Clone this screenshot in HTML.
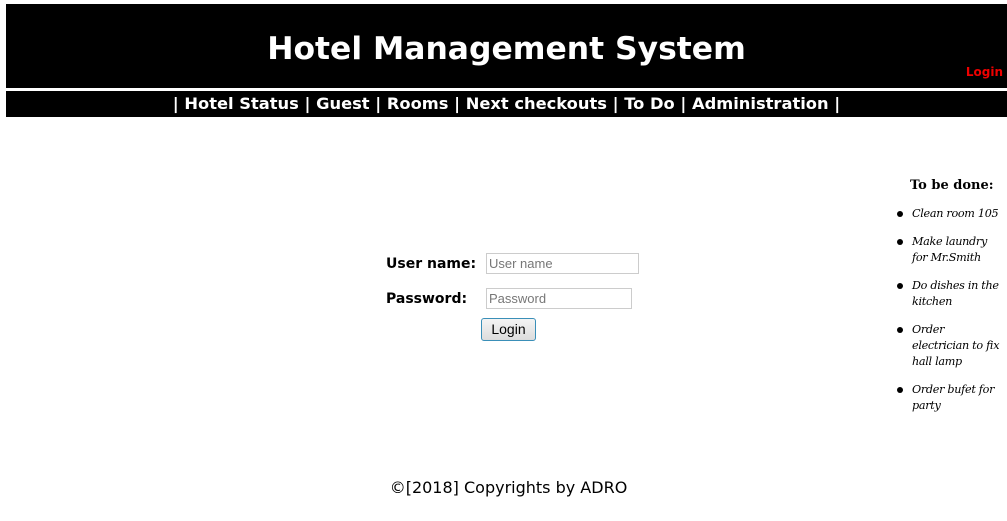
<!DOCTYPE html>
<html><head><style>
body{margin:0;width:1007px;height:521px;background:#fff;position:relative;overflow:hidden;font-family:"DejaVu Sans","Liberation Sans",sans-serif}
.hdr{position:absolute;left:6px;top:4px;width:1001px;height:84px;background:#000}
.hdr h1{margin:0;position:absolute;left:0;width:1001px;top:26px;text-align:center;color:#fff;font-size:31.4px;line-height:38px;font-weight:bold}
.lg{position:absolute;right:4px;top:61px;color:#e00;font-size:12px;font-weight:bold}
.nav{position:absolute;left:6px;top:91px;width:1001px;height:26px;background:#000;color:#fff;text-align:center;font-size:16.3px;font-weight:bold;line-height:26px;white-space:nowrap}
.lab{position:absolute;font-weight:bold;font-size:14px;color:#000}
.inp{position:absolute;height:21px;border:1px solid #ccc;box-sizing:border-box;font-family:"Liberation Sans",sans-serif;font-size:13px;color:#777;padding:3px 2px;line-height:14px}
.btn{position:absolute;left:481px;top:318px;width:55px;height:23px;box-sizing:border-box;border:1px solid #3a8fb8;border-radius:3px;background:linear-gradient(#f4f4f4,#dcdcdc);font-family:"Liberation Sans",sans-serif;font-size:14px;text-align:center;line-height:20px}
.side{position:absolute;left:893px;top:178px;width:114px;font-family:"DejaVu Serif","Liberation Serif",serif;font-size:12px}
.side h4{margin:0 0 13px 17px;font-size:13px}
.side ul{margin:0;padding:0 0 0 19px;list-style:none}
.side li{position:relative;font-style:italic;margin-bottom:12px;line-height:16px;font-size:11.2px;letter-spacing:-0.3px;white-space:nowrap}
.side li:before{content:"";position:absolute;left:-15px;top:5px;width:6px;height:6px;border-radius:50%;background:#000}
.foot{position:absolute;left:0;width:1017px;top:478px;text-align:center;font-size:16px}
</style></head><body>
<div class="hdr"><h1>Hotel Management System</h1><div class="lg">Login</div></div>
<div class="nav">| Hotel Status | Guest | Rooms | Next checkouts | To Do | Administration |</div>
<div class="lab" style="left:386px;top:256px">User name:</div>
<div class="inp" style="left:486px;top:253px;width:153px">User name</div>
<div class="lab" style="left:386px;top:291px">Password:</div>
<div class="inp" style="left:486px;top:288px;width:146px">Password</div>
<div class="btn">Login</div>
<div class="side"><h4>To be done:</h4><ul>
<li>Clean room 105</li><li>Make laundry<br>for Mr.Smith</li><li>Do dishes in the<br>kitchen</li><li>Order<br>electrician to fix<br>hall lamp</li><li>Order bufet for<br>party</li></ul></div>
<div class="foot">©[2018] Copyrights by ADRO</div>
</body></html>
